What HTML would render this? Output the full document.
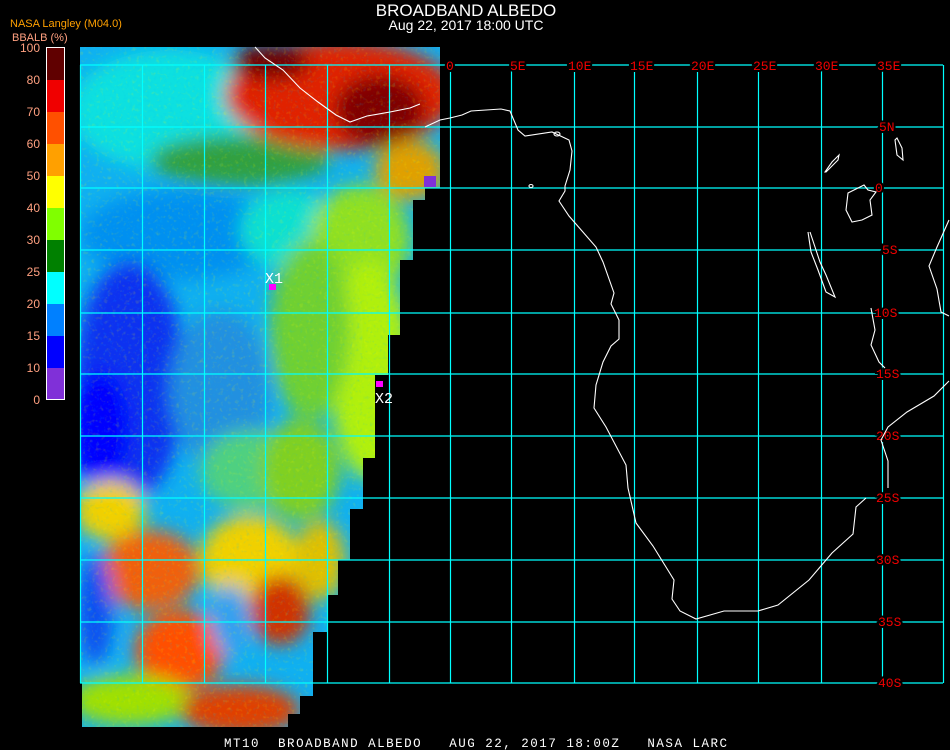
<!DOCTYPE html>
<html><head><meta charset="utf-8"><style>
html,body{margin:0;padding:0;background:#000;width:950px;height:750px;overflow:hidden}
svg{display:block}
text{font-family:"Liberation Mono",monospace}
.s{font-family:"Liberation Sans",sans-serif}
.k{stroke:#000;stroke-width:4;paint-order:stroke}
</style></head><body>
<svg width="950" height="750" viewBox="0 0 950 750" xmlns="http://www.w3.org/2000/svg">
<defs>
<clipPath id="dc"><polygon points="80,47 440,47 440,188 437,188 425,188 425,200 413,200 413,260 400,260 400,335 388,335 388,375 375,375 375,458 363,458 363,509 350,509 350,560 338,560 338,595 327,595 327,632 313,632 313,696 300,696 300,714 288,714 288,727 82,727 82,683 80,683"/></clipPath>
<filter id="bl" x="-20%" y="-20%" width="140%" height="140%"><feGaussianBlur stdDeviation="9"/></filter>
<filter id="nz"><feTurbulence type="fractalNoise" baseFrequency="0.25" numOctaves="2" seed="3"/><feColorMatrix type="matrix" values="0 0 0 0 1  0 0 0 0 1  0 0 0 0 0  0 0 0 1.6 -0.9"/></filter>
<filter id="nz2"><feTurbulence type="fractalNoise" baseFrequency="0.3" numOctaves="2" seed="8"/><feColorMatrix type="matrix" values="0 0 0 0 0  0 0 0 0 0.5  0 0 0 0 1  0 0 0 1.6 -0.9"/></filter>
</defs>
<g clip-path="url(#dc)">
<rect x="70" y="40" width="380" height="700" fill="#10b0f0"/>
<g filter="url(#bl)">
<ellipse cx="170" cy="110" rx="100" ry="60" fill="#10e0e0"/>
<ellipse cx="240" cy="160" rx="90" ry="25" fill="#30a040"/>
<ellipse cx="340" cy="95" rx="115" ry="55" fill="#e02000"/>
<ellipse cx="270" cy="62" rx="40" ry="18" fill="#700000"/>
<ellipse cx="380" cy="110" rx="45" ry="35" fill="#800000"/>
<ellipse cx="410" cy="170" rx="35" ry="30" fill="#e0a000"/>
<ellipse cx="180" cy="235" rx="100" ry="45" fill="#0090f0"/>
<ellipse cx="290" cy="230" rx="50" ry="40" fill="#10e0d0"/>
<ellipse cx="360" cy="240" rx="50" ry="55" fill="#90e020"/>
<ellipse cx="370" cy="370" rx="40" ry="110" fill="#b0f010"/>
<ellipse cx="310" cy="330" rx="40" ry="90" fill="#70d030"/>
<ellipse cx="130" cy="380" rx="55" ry="120" fill="#1030f0"/>
<ellipse cx="100" cy="430" rx="30" ry="60" fill="#0000ff"/>
<ellipse cx="220" cy="390" rx="50" ry="80" fill="#2090e0"/>
<ellipse cx="250" cy="470" rx="50" ry="40" fill="#50d080"/>
<ellipse cx="300" cy="470" rx="40" ry="50" fill="#80d020"/>
<ellipse cx="110" cy="510" rx="35" ry="30" fill="#f0d000" />
<ellipse cx="150" cy="570" rx="50" ry="40" fill="#f06010"/>
<ellipse cx="95" cy="610" rx="18" ry="55" fill="#1050f0"/>
<ellipse cx="180" cy="650" rx="45" ry="40" fill="#ff5000"/>
<ellipse cx="250" cy="560" rx="50" ry="45" fill="#f0d000"/>
<ellipse cx="280" cy="610" rx="30" ry="35" fill="#d03000"/>
<ellipse cx="320" cy="560" rx="25" ry="40" fill="#e0c000"/>
<ellipse cx="230" cy="620" rx="20" ry="35" fill="#30a0f0"/>
<ellipse cx="130" cy="700" rx="60" ry="25" fill="#a0e000"/>
<ellipse cx="240" cy="710" rx="60" ry="25" fill="#e04000"/>
</g>
<rect x="70" y="40" width="380" height="700" filter="url(#nz)" opacity="0.35"/>
<rect x="70" y="40" width="380" height="700" filter="url(#nz2)" opacity="0.3"/>
</g>
<!-- grid -->
<g stroke="#00ffff" stroke-width="1.2" fill="none">
<path d="M80.5 65V683M142.5 65V683M204.5 65V683M265.5 65V683M327.5 65V683M389.5 65V683M450.5 65V683M511.5 65V683M574.5 65V683M634.5 65V683M697.5 65V683M758.5 65V683M821.5 65V683M882.5 65V683M943.5 65V683"/>
<path d="M80 65H943M80 127H943M80 188H943M80 250H943M80 313H943M80 374H943M80 436H943M80 498H943M80 560H943M80 622H943M80 683H943"/>
</g>
<g fill="#f00000" font-size="13" class="k">
<text x="446" y="70" class="k">0</text><text x="510" y="70" class="k">5E</text><text x="568" y="70" class="k">10E</text><text x="630" y="70" class="k">15E</text><text x="691" y="70" class="k">20E</text><text x="753" y="70" class="k">25E</text><text x="815" y="70" class="k">30E</text><text x="877" y="70" class="k">35E</text>
<text x="879" y="131" class="k">5N</text><text x="875" y="192" class="k">0</text><text x="882" y="254" class="k">5S</text><text x="874" y="317" class="k">10S</text><text x="876" y="378" class="k">15S</text><text x="876" y="440" class="k">20S</text><text x="876" y="502" class="k">25S</text><text x="876" y="564" class="k">30S</text><text x="878" y="626" class="k">35S</text><text x="878" y="687" class="k">40S</text>
</g>
<!-- coastline -->
<g stroke="#fff" stroke-width="1.1" fill="none">
<polyline points="425,127 440,120 450,118 462,115 471,111 501,109 510,111 518,130 525,136 552,132 569,140 572,151 570,170 565,186 565,191 559,201 569,216 596,247 603,262 614,293 611,304 619,320 619,339 611,346 603,362 596,385 594,408 606,427 626,465 628,488 636,523 653,546 674,580 672,599 680,611 696,619 724,611 758,611 778,605 809,580 832,553 853,534 856,507 866,498"/>
<polyline points="888,488 888,461 881,440 888,427 907,412 934,396 949,381"/>
<polyline points="949,220 937,247 929,266 937,289 941,312 949,316"/>
<polyline points="871,308 875,330 871,345 879,362 885,368"/>
<polyline points="808,232 811,252 818,270 826,292 835,297 826,275 820,262 810,232"/>
<path d="M864 185 L848 193 846 210 852 222 862 220 872 215 870 200 876 192 868 190Z"/>
<path d="M826 172 L838 160 839 155 832 162 825 172Z"/>
<path d="M895 140 L897 155 903 160 902 148 897 138Z"/>
<ellipse cx="557" cy="134" rx="3" ry="2"/><ellipse cx="531" cy="186" rx="2" ry="1.5"/>
<polyline points="255,47 265,58 283,70 300,88 318,102 336,115 350,122 367,116 390,112 410,108 420,104"/>
</g>
<!-- markers -->
<rect x="424" y="176" width="12" height="11" fill="#8030d8"/>
<rect x="269" y="284" width="7" height="6" fill="#ff00ff"/>
<rect x="376" y="381" width="7" height="6" fill="#ff00ff"/>
<text x="265" y="283" fill="#fff" font-size="15">X1</text>
<text x="375" y="403" fill="#fff" font-size="15">X2</text>
<!-- legend -->
<text x="10" y="27" class="s" fill="#ffa000" font-size="11">NASA Langley (M04.0)</text>
<text x="12" y="41" class="s" fill="#ffa080" font-size="11">BBALB (%)</text>
<rect x="46" y="47" width="19" height="353" fill="#fff"/>
<rect x="47" y="48" width="17" height="32" fill="#600000"/>
<rect x="47" y="80" width="17" height="32" fill="#f00000"/>
<rect x="47" y="112" width="17" height="32" fill="#ff5000"/>
<rect x="47" y="144" width="17" height="32" fill="#ffa000"/>
<rect x="47" y="176" width="17" height="32" fill="#ffff00"/>
<rect x="47" y="208" width="17" height="32" fill="#80ff00"/>
<rect x="47" y="240" width="17" height="32" fill="#008000"/>
<rect x="47" y="272" width="17" height="32" fill="#00ffff"/>
<rect x="47" y="304" width="17" height="32" fill="#0080ff"/>
<rect x="47" y="336" width="17" height="32" fill="#0000ff"/>
<rect x="47" y="368" width="17" height="31" fill="#8030d8"/>
<g class="s" fill="#ffa080" font-size="12" text-anchor="end">
<text x="40" y="52" class="s">100</text><text x="40" y="84" class="s">80</text><text x="40" y="116" class="s">70</text><text x="40" y="148" class="s">60</text><text x="40" y="180" class="s">50</text><text x="40" y="212" class="s">40</text><text x="40" y="244" class="s">30</text><text x="40" y="276" class="s">25</text><text x="40" y="308" class="s">20</text><text x="40" y="340" class="s">15</text><text x="40" y="372" class="s">10</text><text x="40" y="404" class="s">0</text>
</g>
<text x="466" y="16" class="s" fill="#fff" font-size="17" text-anchor="middle">BROADBAND ALBEDO</text>
<text x="466" y="30" class="s" fill="#fff" font-size="14" text-anchor="middle">Aug 22, 2017 18:00 UTC</text>
<text x="224" y="747" fill="#fff" font-size="12.5" textLength="503" lengthAdjust="spacing" xml:space="preserve">MT10  BROADBAND ALBEDO   AUG 22, 2017 18:00Z   NASA LARC</text>
</svg>
</body></html>
